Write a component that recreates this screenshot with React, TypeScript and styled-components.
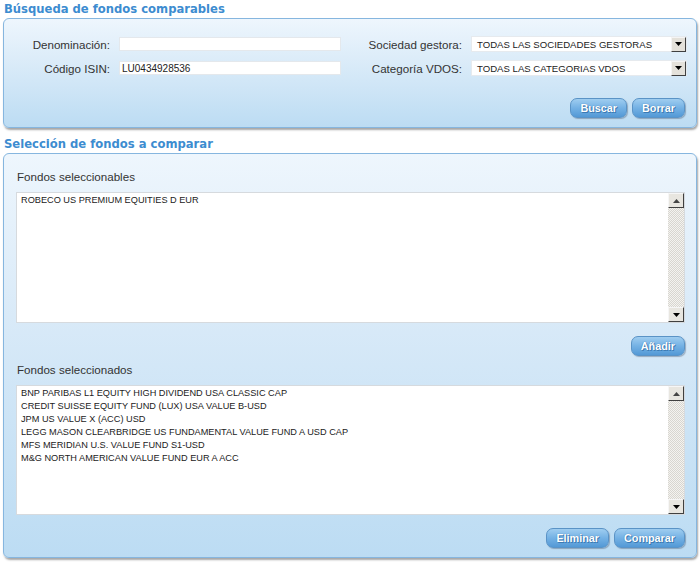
import styled, { createGlobalStyle } from "styled-components";

const GlobalStyle = createGlobalStyle`
	html, body {
		margin: 0;
		padding: 0;
		background: #ffffff;
	}
	body {
		font-family: "Liberation Sans", Arial, sans-serif;
	}
`;

const disponibles = ["ROBECO US PREMIUM EQUITIES D EUR"];

const seleccionados = [
	"BNP PARIBAS L1 EQUITY HIGH DIVIDEND USA CLASSIC CAP",
	"CREDIT SUISSE EQUITY FUND (LUX) USA VALUE B-USD",
	"JPM US VALUE X (ACC) USD",
	"LEGG MASON CLEARBRIDGE US FUNDAMENTAL VALUE FUND A USD CAP",
	"MFS MERIDIAN U.S. VALUE FUND S1-USD",
	"M&G NORTH AMERICAN VALUE FUND EUR A ACC",
];

const Arrow = ({ down }: { down?: boolean }) => (
	<svg width="7" height="4" viewBox="0 0 7 4">
		<polygon points={down ? "0,0 7,0 3.5,4" : "0,4 7,4 3.5,0"} fill={down ? "#000" : "#444"} />
	</svg>
);

const Combo = ({ value }: { value: string }) => (
	<SelectBox>
		<span>{value}</span>
		<DropButton>
			<Arrow down />
		</DropButton>
	</SelectBox>
);

const ListBox = ({ items, height }: { items: string[]; height: number }) => (
	<ListFrame $height={height}>
		<ListItems>
			{items.map((item) => (
				<div key={item}>{item}</div>
			))}
		</ListItems>
		<ScrollBar>
			<ScrollButton>
				<Arrow />
			</ScrollButton>
			<ScrollTrack />
			<ScrollButton>
				<Arrow down />
			</ScrollButton>
		</ScrollBar>
	</ListFrame>
);

const App = () => {
	return (
		<Page>
			<GlobalStyle />
			<Title $top={1}>Búsqueda de fondos comparables</Title>
			<SearchPanel>
				<FilterGrid>
					<Label>Denominación:</Label>
					<TextInput value="" readOnly />
					<Label>Sociedad gestora:</Label>
					<Combo value="TODAS LAS SOCIEDADES GESTORAS" />
					<Label>Código ISIN:</Label>
					<TextInput value="LU0434928536" readOnly />
					<Label>Categoría VDOS:</Label>
					<Combo value="TODAS LAS CATEGORIAS VDOS" />
				</FilterGrid>
				<ButtonRow $top={22}>
					<Button>Buscar</Button>
					<Button>Borrar</Button>
				</ButtonRow>
			</SearchPanel>

			<Title $top={8}>Selección de fondos a comparar</Title>
			<SelectPanel>
				<ListLabel>Fondos seleccionables</ListLabel>
				<ListBox items={disponibles} height={131} />
				<ButtonRow $top={13} $bottom={7}>
					<Button>Añadir</Button>
				</ButtonRow>
				<ListLabel>Fondos seleccionados</ListLabel>
				<ListBox items={seleccionados} height={130} />
				<ButtonRow $top={13}>
					<Button>Eliminar</Button>
					<Button>Comparar</Button>
				</ButtonRow>
			</SelectPanel>
		</Page>
	);
};

export default App;

const Page = styled.div`
	width: 694px;
	padding: 0 3px 5px 3px;
`;

const Title = styled.h2<{ $top?: number }>`
	margin: ${(p) => p.$top ?? 0}px 0 1px 1px;
	font-family: "DejaVu Sans", Verdana, sans-serif;
	font-size: 11.6px;
	font-weight: bold;
	line-height: 16px;
	color: #3d8cd0;
`;

const Panel = styled.div`
	box-sizing: border-box;
	border: 1px solid #86b6df;
	border-radius: 6px;
	background: linear-gradient(to bottom, #eef6fd 0%, #d8eaf8 45%, #bcdcf3 100%);
	box-shadow: 1px 2px 2px rgba(60, 60, 60, 0.45);
`;

const SearchPanel = styled(Panel)`
	padding: 17px 11px 9px 0;
`;

const SelectPanel = styled(Panel)`
	padding: 16px 11px 9px 12px;
	background: linear-gradient(to bottom, #eef6fd 0%, #d9eaf8 40%, #bcdcf3 100%);
`;

const FilterGrid = styled.div`
	display: grid;
	grid-template-columns: 106px 222px 112px 216px;
	grid-auto-rows: 16px;
	column-gap: 9px;
	row-gap: 8px;
	align-items: center;
`;

const Label = styled.label`
	text-align: right;
	font-size: 11.6px;
	color: #333333;
	white-space: nowrap;
`;

const TextInput = styled.input`
	box-sizing: border-box;
	height: 14px;
	width: 100%;
	margin: 0;
	padding: 0 2px;
	border: 1px solid #e4e8ec;
	background: #ffffff;
	font-family: "Liberation Sans", Arial, sans-serif;
	font-size: 10px;
	color: #222222;
	outline: none;
`;

const SelectBox = styled.div`
	box-sizing: border-box;
	height: 16px;
	display: flex;
	align-items: center;
	justify-content: space-between;
	padding-left: 5px;
	background: #ffffff;
	border: 1px solid #e6eaee;
	font-size: 9.6px;
	color: #222222;
`;

const DropButton = styled.div`
	box-sizing: border-box;
	width: 15px;
	height: 15px;
	display: flex;
	align-items: center;
	justify-content: center;
	background: #e4e1da;
	border: 1px solid;
	border-color: #f4f4f4 #404040 #404040 #f4f4f4;
`;

const ButtonRow = styled.div<{ $top: number; $bottom?: number }>`
	display: flex;
	justify-content: flex-end;
	gap: 5px;
	margin-top: ${(p) => p.$top}px;
	margin-bottom: ${(p) => p.$bottom ?? 0}px;
`;

const Button = styled.button`
	box-sizing: border-box;
	height: 20px;
	padding: 0 9px;
	border: 1px solid #5a93c6;
	border-radius: 7px;
	background: linear-gradient(to bottom, #9fcdf0 0%, #74b1e4 50%, #5399d6 100%);
	box-shadow: 1px 1px 1px rgba(40, 60, 90, 0.35);
	font-family: "Liberation Sans", Arial, sans-serif;
	font-size: 10.8px;
	font-weight: bold;
	color: #ffffff;
	text-shadow: 0 0 1px #2d6ca5, 1px 1px 0 #3d7cb5;
	cursor: pointer;
`;

const ListLabel = styled.div`
	font-size: 11.6px;
	color: #333333;
	line-height: 14px;
	margin: 0 0 8px 1px;
`;

const ListFrame = styled.div<{ $height: number }>`
	box-sizing: border-box;
	height: ${(p) => p.$height}px;
	display: flex;
	background: #ffffff;
	border: 1px solid #d6dade;
`;

const ListItems = styled.div`
	flex: 1;
	padding: 1px 4px;
	font-size: 9.2px;
	line-height: 13px;
	color: #222222;
`;

const ScrollBar = styled.div`
	width: 16px;
	display: flex;
	flex-direction: column;
`;

const ScrollButton = styled.div`
	box-sizing: border-box;
	height: 15px;
	display: flex;
	align-items: center;
	justify-content: center;
	background: #e8e6e0;
	border: 1px solid;
	border-color: #f6f6f6 #404040 #404040 #f6f6f6;
`;

const ScrollTrack = styled.div`
	flex: 1;
	background-color: #ffffff;
	background-image: repeating-conic-gradient(#d8d6d0 0% 25%, #f4f3f0 0% 50%);
	background-size: 2px 2px;
`;
